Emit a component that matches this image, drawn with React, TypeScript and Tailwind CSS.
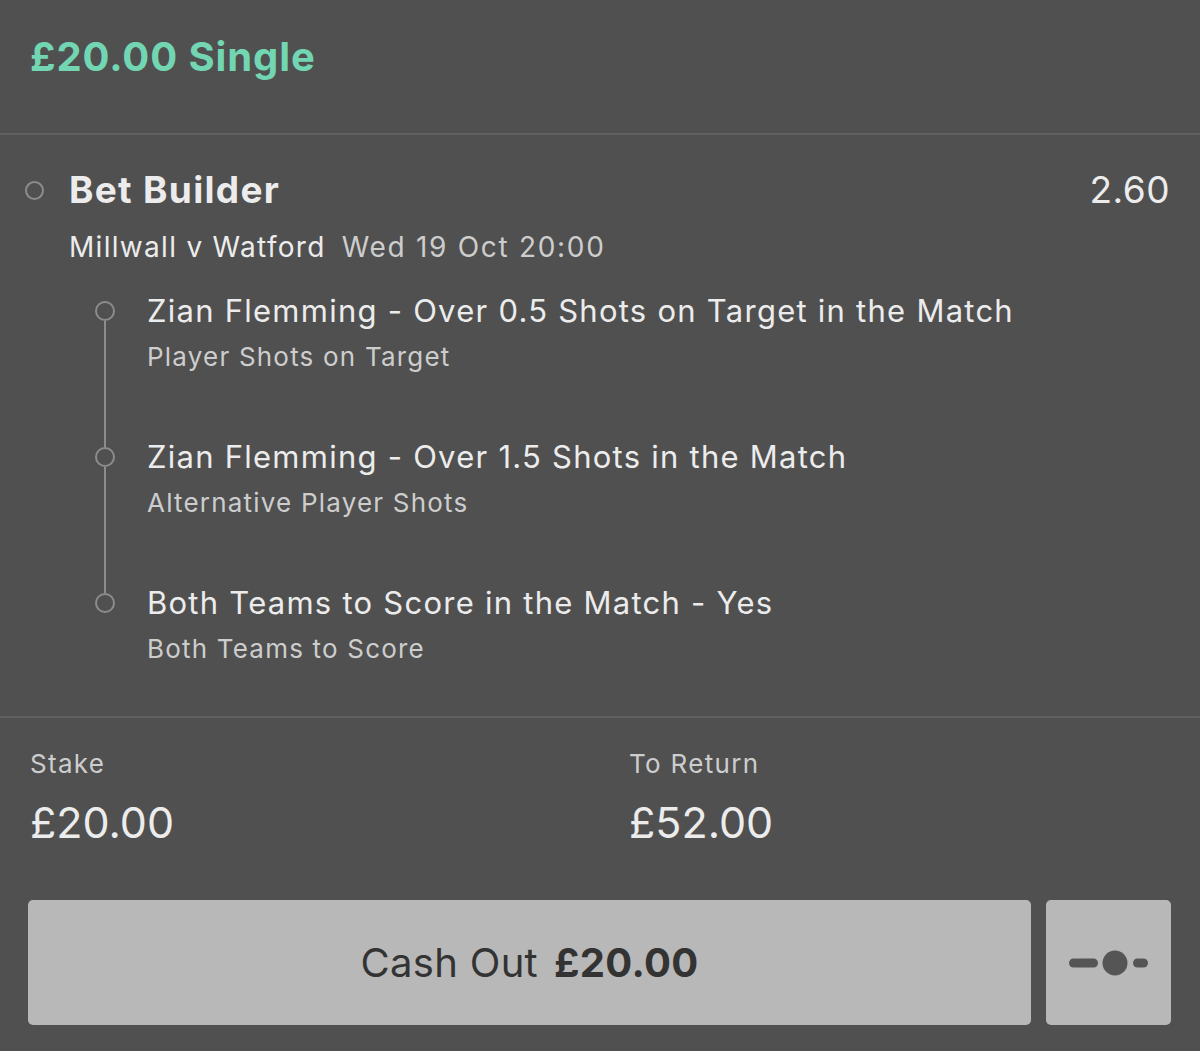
import React from "react";

const legs = [
  { title: "Zian Flemming - Over 0.5 Shots on Target in the Match", sub: "Player Shots on Target" },
  { title: "Zian Flemming - Over 1.5 Shots in the Match", sub: "Alternative Player Shots" },
  { title: "Both Teams to Score in the Match - Yes", sub: "Both Teams to Score" },
];

export default function App() {
  return (
    <div
      className="w-[1200px] h-[1051px] bg-[#505050] overflow-hidden"
      style={{ fontFamily: "Inter, 'Noto Sans', sans-serif" }}
    >
      <div className="h-[135px] pt-[33px] px-[30px] border-b-2 border-[#606060]">
        <div className="text-[40px] leading-[48px] font-bold text-[#72d6b3] tracking-[0.9px]">
          £20.00 Single
        </div>
      </div>

      <div className="pt-[33px] pb-[50px] border-b-2 border-[#606060]">
        <div className="flex items-center pl-[25px] pr-[30px] h-[44px]">
          <div className="w-[19px] h-[19px] rounded-full border-[2.5px] border-[#8c8c8c]" />
          <div className="ml-[25px] text-[37px] leading-[44px] font-bold text-[#ececec] tracking-[1.3px]">Bet Builder</div>
          <div className="ml-auto text-[37px] leading-[44px] text-[#ececec] tracking-[0.5px]">2.60</div>
        </div>
        <div className="mt-[15px] pl-[69px] h-[40px] flex items-center text-[28px] leading-[40px]">
          <span className="text-[#ececec] tracking-[1.3px]">Millwall v Watford</span>
          <span className="ml-[16px] text-[#cdcdcd] tracking-[1.7px]">Wed 19 Oct 20:00</span>
        </div>
        <div className="mt-[24px] pl-[95px]">
          {legs.map((leg, i) => {
            const first = i === 0;
            const last = i === legs.length - 1;
            return (
              <div key={i} className="flex">
                <div className="w-[20px] flex flex-col items-center">
                  <div className={`w-[2.5px] h-[10px] ${first ? "" : "bg-[#8c8c8c]"}`} />
                  <div className="w-[20px] h-[20px] rounded-full border-[2.5px] border-[#8c8c8c] shrink-0" />
                  {!last && <div className="w-[2.5px] flex-1 bg-[#8c8c8c]" />}
                </div>
                <div className={`ml-[32px] ${last ? "" : "pb-[63px]"}`}>
                  <div className="text-[31px] leading-[40px] text-[#ececec] tracking-[1.25px]">{leg.title}</div>
                  <div className="mt-[9px] text-[26px] leading-[34px] text-[#cdcdcd] tracking-[1.2px]">{leg.sub}</div>
                </div>
              </div>
            );
          })}
        </div>
      </div>

      <div className="pt-[29px] px-[30px] grid grid-cols-[599px_1fr]">
        <div>
          <div className="text-[26px] leading-[34px] text-[#cdcdcd] tracking-[1.3px]">Stake</div>
          <div className="mt-[15px] text-[43px] leading-[52px] text-[#ececec]">£20.00</div>
        </div>
        <div>
          <div className="text-[26px] leading-[34px] text-[#cdcdcd] tracking-[1.3px]">To Return</div>
          <div className="mt-[15px] text-[43px] leading-[52px] text-[#ececec]">£52.00</div>
        </div>
      </div>

      <div className="mt-[52px] pl-[28px] pr-[29px] flex gap-[15px]">
        <div className="flex-1 h-[125px] rounded-[5px] bg-[#b8b8b8] flex items-center justify-center text-[40px] text-[#333333] tracking-[0.3px]">
          <span>Cash Out</span>
          <span className="ml-[16px] font-bold">£20.00</span>
        </div>
        <div className="w-[125px] h-[125px] rounded-[5px] bg-[#b8b8b8] flex items-center justify-center">
          <svg width="80" height="26" viewBox="0 0 80 26">
            <rect x="0" y="8.5" width="29" height="9" rx="4.5" fill="#555555" />
            <circle cx="46" cy="13" r="12.5" fill="#555555" />
            <rect x="64" y="8.5" width="15" height="9" rx="4.5" fill="#555555" />
          </svg>
        </div>
      </div>
    </div>
  );
}
